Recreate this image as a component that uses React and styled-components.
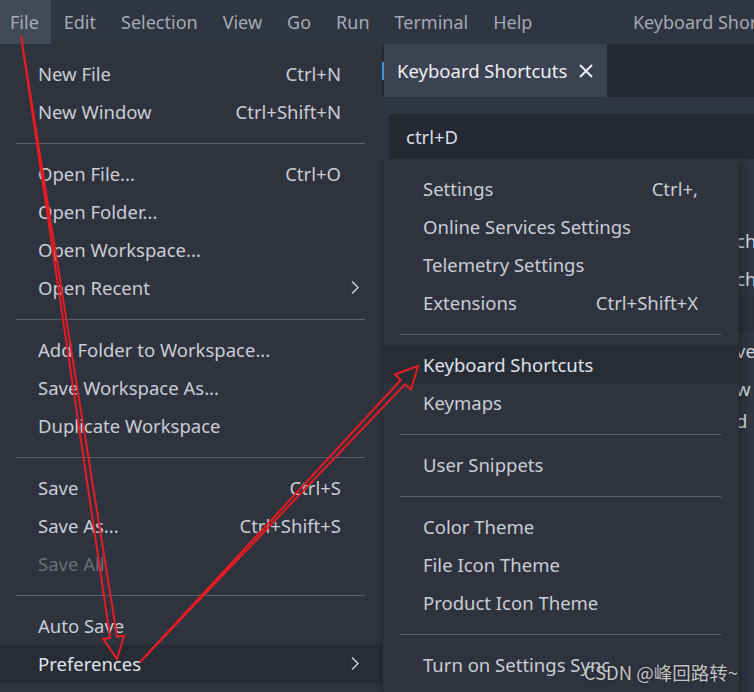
import React from 'react';
import styled, { createGlobalStyle, css } from 'styled-components';

const colors = {
  bar: '#2f3541',
  menu: '#2e333e',
  hover: '#282c35',
  editor: '#2f3541',
  dark: '#242933',
  tab: '#3b4252',
  text: '#c9cdd5',
  dim: '#a3aab6',
  disabled: '#6a707b',
  rule: '#5a606b',
  red: '#e51c24'
};

const GlobalStyle = createGlobalStyle`
  body {
    margin: 0;
    background: ${colors.menu};
    font-family: "Noto Sans", "Open Sans", sans-serif;
  }
`;

const Window = styled.div`
  position: relative;
  width: 754px;
  height: 692px;
  overflow: hidden;
  display: flex;
  flex-direction: column;
  background: ${colors.menu};
`;

const MenuBar = styled.div`
  height: 44px;
  flex: none;
  display: flex;
  background: ${colors.bar};
  white-space: nowrap;
`;

const BarItem = styled.div`
  display: flex;
  align-items: center;
  padding: 0 12.5px 0 ${(props) => (props.$first ? 10 : 12.5)}px;
  font-size: 18px;
  color: ${colors.dim};

  ${(props) =>
    props.$active &&
    css`
      background: #434a57;
    `};
`;

const WindowTitle = styled.div`
  display: flex;
  align-items: center;
  margin-left: 88px;
  font-size: 18px;
  color: ${colors.dim};
`;

const Body = styled.div`
  flex: 1;
  min-height: 0;
  display: flex;
`;

const Menu = styled.div`
  flex: none;
  display: flex;
  flex-direction: column;
  box-sizing: border-box;
  width: ${(props) => props.$width}px;
  padding: ${(props) => props.$padTop}px 0 10px;
  background: ${colors.menu};
`;

const SubMenu = styled(Menu)`
  position: absolute;
  left: 0;
  top: 116px;
  border-left: 1px solid #252a32;
  box-shadow: 2px 3px 8px rgba(0, 0, 0, 0.35);
`;

const Item = styled.div`
  height: 38px;
  flex: none;
  display: flex;
  align-items: center;
  box-sizing: border-box;
  padding: 0 ${(props) => (props.$sub ? 22 : 41)}px 2px ${(props) => props.$indent}px;
  font-size: 18.5px;
  color: ${(props) => (props.$disabled ? colors.disabled : colors.text)};
  white-space: nowrap;

  ${(props) =>
    props.$active &&
    css`
      background: ${colors.hover};
      color: #dfe3ea;
    `};
`;

const ItemLabel = styled.span`
  flex: 1;
`;

const Separator = styled.div`
  height: 24px;
  flex: none;
  display: flex;
  align-items: center;

  &::after {
    content: '';
    flex: 1;
    height: 1px;
    margin: 0 ${(props) => props.$right}px 0 ${(props) => props.$left}px;
    background: ${colors.rule};
  }
`;

const Editor = styled.div`
  position: relative;
  flex: 1;
  min-width: 0;
  display: flex;
  flex-direction: column;
  background: ${colors.editor};
`;

const TabBar = styled.div`
  height: 53px;
  flex: none;
  display: flex;
  align-items: center;
  background: ${colors.dark};
`;

const DirtyMark = styled.div`
  width: 2px;
  height: 18px;
  background: #3d95e0;
`;

const Tab = styled.div`
  align-self: stretch;
  width: 223px;
  display: flex;
  align-items: center;
  gap: 12px;
  padding-left: 13px;
  box-sizing: border-box;
  background: ${colors.tab};
  font-size: 18.5px;
  color: #eceff4;
  white-space: nowrap;
`;

const SearchBox = styled.div`
  height: 45px;
  flex: none;
  display: flex;
  align-items: center;
  margin: 17px 0 0 7px;
  padding-left: 17px;
  background: ${colors.dark};
  font-size: 18.5px;
  color: #d8dee9;
`;

const ResultRow = styled.div`
  height: ${(props) => props.$h}px;
  flex: none;
  display: flex;
  align-items: center;
  padding-left: 354px;
  font-size: 18.5px;
  color: #d0d4dc;
  white-space: nowrap;
  background: ${(props) => (props.$shade ? '#2b303b' : 'transparent')};
`;

const Overlay = styled.svg`
  position: absolute;
  left: 0;
  top: 0;
  pointer-events: none;
`;

const Watermark = styled.div`
  position: absolute;
  right: 16px;
  top: 660px;
  font-family: "Noto Sans CJK SC", "Noto Sans", sans-serif;
  font-size: 18.5px;
  line-height: 24px;
  color: rgba(235, 235, 235, 0.82);
  text-shadow: 0 0 2px rgba(0, 0, 0, 0.6);
  white-space: nowrap;
`;

const fileItems = [
  { label: 'New File', key: 'Ctrl+N' },
  { label: 'New Window', key: 'Ctrl+Shift+N' },
  'sep',
  { label: 'Open File...', key: 'Ctrl+O' },
  { label: 'Open Folder...' },
  { label: 'Open Workspace...' },
  { label: 'Open Recent', sub: true },
  'sep',
  { label: 'Add Folder to Workspace...' },
  { label: 'Save Workspace As...' },
  { label: 'Duplicate Workspace' },
  'sep',
  { label: 'Save', key: 'Ctrl+S' },
  { label: 'Save As...', key: 'Ctrl+Shift+S' },
  { label: 'Save All', disabled: true },
  'sep',
  { label: 'Auto Save' },
  { label: 'Preferences', sub: true, active: true }
];

const prefItems = [
  { label: 'Settings', key: 'Ctrl+,' },
  { label: 'Online Services Settings' },
  { label: 'Telemetry Settings' },
  { label: 'Extensions', key: 'Ctrl+Shift+X' },
  'sep',
  { label: 'Keyboard Shortcuts', active: true },
  { label: 'Keymaps' },
  'sep',
  { label: 'User Snippets' },
  'sep',
  { label: 'Color Theme' },
  { label: 'File Icon Theme' },
  { label: 'Product Icon Theme' },
  'sep',
  { label: 'Turn on Settings Sync' }
];

const results = [
  { text: '', h: 62 },
  { text: 'ch', h: 38 },
  { text: 'ch', h: 38 },
  { text: '', h: 34, shade: true },
  { text: 've', h: 38 },
  { text: 'w', h: 38 },
  { text: 'd', h: 26 }
];

function Chevron() {
  return (
    <svg width="10" height="15" viewBox="0 0 10 15">
      <polyline points="2,1.5 8,7.5 2,13.5" fill="none" stroke="#c9cdd5" strokeWidth="1.5" />
    </svg>
  );
}

function CloseIcon() {
  return (
    <svg width="14" height="14" viewBox="0 0 14 14">
      <path d="M1 1 L13 13 M13 1 L1 13" stroke="#eceff4" strokeWidth="2" />
    </svg>
  );
}

function MenuList({ items, indent, rule }) {
  return items.map((item, i) =>
    item === 'sep' ? (
      <Separator key={i} $left={rule[0]} $right={rule[1]} />
    ) : (
      <Item key={i} $indent={indent} $sub={item.sub} $active={item.active} $disabled={item.disabled}>
        <ItemLabel>{item.label}</ItemLabel>
        {item.key && <span>{item.key}</span>}
        {item.sub && <Chevron />}
      </Item>
    )
  );
}

// tapered hollow arrow, as drawn by a screenshot tool
function arrowPoints(sx, sy, tx, ty, head, shaft, wing) {
  const len = Math.hypot(tx - sx, ty - sy);
  const ux = (tx - sx) / len;
  const uy = (ty - sy) / len;
  const nx = -uy;
  const ny = ux;
  const bx = tx - ux * head;
  const by = ty - uy * head;
  const p = (x, y) => `${x.toFixed(1)},${y.toFixed(1)}`;
  return [
    p(sx, sy),
    p(bx + nx * shaft, by + ny * shaft),
    p(bx + nx * wing, by + ny * wing),
    p(tx, ty),
    p(bx - nx * wing, by - ny * wing),
    p(bx - nx * shaft, by - ny * shaft)
  ].join(' ');
}

export default function App() {
  return (
    <Window>
      <GlobalStyle />
      <MenuBar>
        <BarItem $first $active>File</BarItem>
        <BarItem>Edit</BarItem>
        <BarItem>Selection</BarItem>
        <BarItem>View</BarItem>
        <BarItem>Go</BarItem>
        <BarItem>Run</BarItem>
        <BarItem>Terminal</BarItem>
        <BarItem>Help</BarItem>
        <WindowTitle>Keyboard Shortcuts - Visual Studio Code</WindowTitle>
      </MenuBar>
      <Body>
        <Menu $width={382} $padTop={11}>
          <MenuList items={fileItems} indent={38} rule={[16, 17]} />
        </Menu>
        <Editor>
          <TabBar>
            <DirtyMark />
            <Tab>
              Keyboard Shortcuts
              <CloseIcon />
            </Tab>
          </TabBar>
          <SearchBox>ctrl+D</SearchBox>
          {results.map((row, i) => (
            <ResultRow key={i} $h={row.h} $shade={row.shade}>
              {row.text}
            </ResultRow>
          ))}
          <SubMenu $width={357} $padTop={10}>
            <MenuList items={prefItems} indent={40} rule={[17, 18]} />
          </SubMenu>
        </Editor>
      </Body>
      <Overlay width="754" height="692">
        <polygon
          points={arrowPoints(21, 36, 117, 659, 22, 3.5, 10.5)}
          fill="none"
          stroke={colors.red}
          strokeWidth="2"
          strokeLinejoin="miter"
        />
        <polygon
          points={arrowPoints(140, 662, 418, 366, 22, 3, 11)}
          fill="none"
          stroke={colors.red}
          strokeWidth="2"
          strokeLinejoin="miter"
        />
      </Overlay>
      <Watermark>CSDN @峰回路转~</Watermark>
    </Window>
  );
}
